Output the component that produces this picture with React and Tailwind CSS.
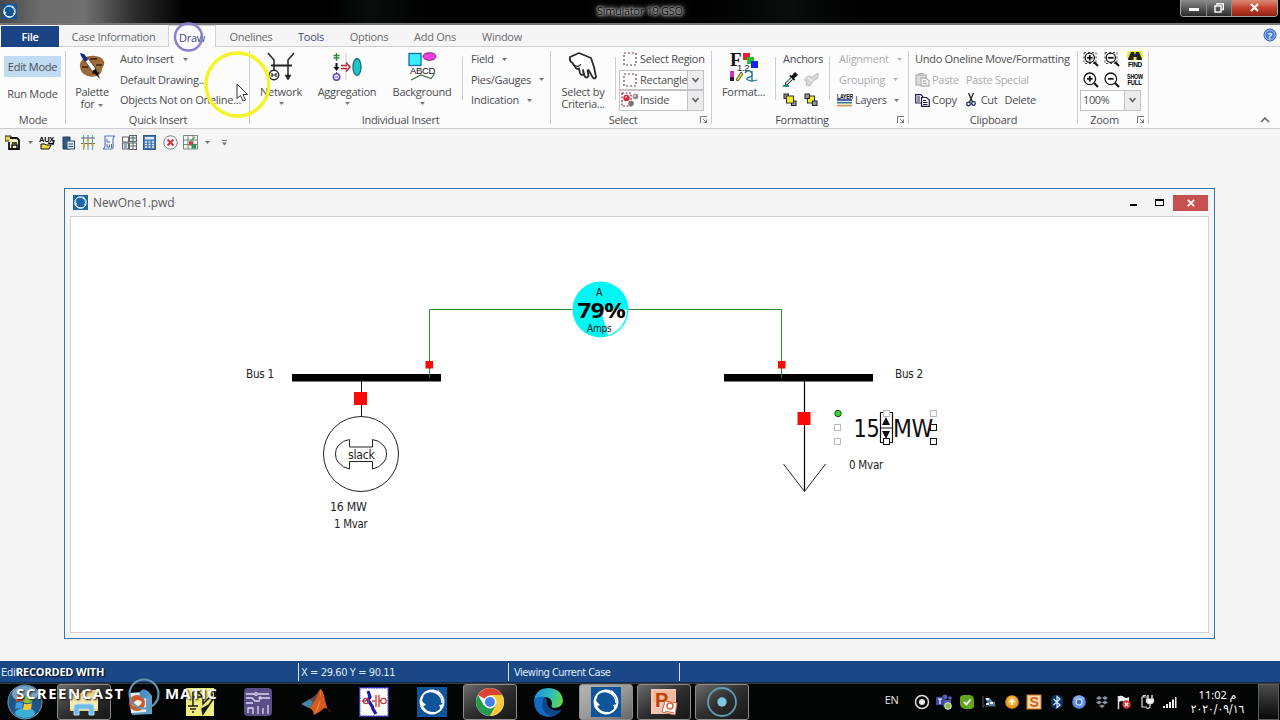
import { clsx } from 'clsx';

const uiFont = "font-['Open_Sans','Noto_Sans',sans-serif]";
const tahoma = "'DejaVu Sans Condensed', 'DejaVu Sans', sans-serif";

const tabs = [
  { name: 'Case Information', cls: 'w-[109px]' },
  { name: 'Draw', cls: 'w-[48px]', active: true },
  { name: 'Onelines', cls: 'w-[70px]' },
  { name: 'Tools', cls: 'w-[50px]', dark: true },
  { name: 'Options', cls: 'w-[66px]' },
  { name: 'Add Ons', cls: 'w-[66px]' },
  { name: 'Window', cls: 'w-[68px]' },
];

/* ---------- shared bits ---------- */

function Arrow({ className }) {
  return (
    <svg width="5" height="3" viewBox="0 0 5 3" className={clsx('shrink-0', className)}>
      <path d="M0 0H5L2.5 3Z" fill="#777" />
    </svg>
  );
}

function Sep() {
  return <div className="w-px h-[43px] mt-[10px] bg-[#cfcfd1] shrink-0" />;
}

function Group({ label, width, labelShift, launcher, children }) {
  return (
    <div className={clsx('relative flex flex-col h-[81px] shrink-0', width)}>
      <div className="flex h-[63px]">{children}</div>
      <div className={clsx('h-[18px] leading-[20px] text-center', labelShift)}>{label}</div>
      {launcher && (
        <svg width="8" height="8" viewBox="0 0 8 8" className="absolute right-[4px] bottom-[4px]" fill="none" stroke="#777">
          <path d="M.5 7V.5H7M3 3L6.5 6.5M6.5 3.5V6.5H3.5" />
        </svg>
      )}
      <div className="absolute right-0 top-[4px] h-[73px] w-px bg-[#cfcfd1]" />
    </div>
  );
}

function Row({ children, className }) {
  return <div className={clsx('flex items-center h-[20.6px] whitespace-nowrap', className)}>{children}</div>;
}

function BigButton({ icon, label, label2, width, arrow }) {
  return (
    <div className={clsx('flex flex-col items-center pt-[5px] shrink-0', width)}>
      <div className="h-[34px] flex items-start justify-center">{icon}</div>
      <span className="leading-[12px] whitespace-nowrap">{label}</span>
      {label2 && (
        <span className="flex items-center gap-[4px] leading-[12px] whitespace-nowrap">
          {label2}
          {arrow && <Arrow className="mt-[2px]" />}
        </span>
      )}
      {!label2 && arrow && <Arrow className="mt-[4px]" />}
    </div>
  );
}

function Combo({ icon, text, width }) {
  return (
    <div className={clsx('flex items-center h-[20.5px] border border-[#c3c3c5] bg-white', width)}>
      {icon}
      <span className="flex-1 overflow-hidden whitespace-nowrap">{text}</span>
      <span className="w-[16px] h-full bg-[#ececee] border-l border-[#c3c3c5] flex items-center justify-center shrink-0">
        <svg width="7" height="6" viewBox="0 0 7 6" fill="none" stroke="#666" strokeWidth="1.7">
          <path d="M.5 1L3.5 4.5L6.5 1" />
        </svg>
      </span>
    </div>
  );
}

function PowerWorldLogo({ size, light }) {
  return (
    <svg width={size} height={size} viewBox="0 0 30 30" className="shrink-0">
      <rect width="30" height="30" fill={light ? '#1a66a8' : '#0f5599'} />
      <circle cx="15" cy="15" r="11.5" fill="none" stroke="#fff" strokeWidth="1.8" />
      <path d="M6 9A11 11 0 0 0 17 25.5M9 5.5A11.500 11.500 0 0 1 25 16M4 19A12 12 0 0 0 24 22" fill="none" stroke="#fff" strokeWidth="1.4" />
      <path d="M21 3l4 5-6-1zM4 20l1-6 4 4zM27 17l-3 6-2-5z" fill="#fff" />
    </svg>
  );
}

/* ---------- ribbon icons ---------- */

function PaletteIcon() {
  return (
    <svg width="28" height="30" viewBox="0 0 28 30">
      <path d="M2 15C1 8 8 3 17 4C26 5 28 11 25 15C23 17 25 19 22 22C16 27 3 25 2 15Z" fill="#9c6a3a" />
      <path d="M12 7h7M18 13h6M4 15h6M14 21h7" stroke="#3b2412" strokeWidth="1.6" />
      <path d="M2 1l4 1 4 5-3 3-4-6z" fill="#162c8c" />
      <path d="M7.500 9.500L10.500 7L18 17L14.500 19.500Z" fill="#fff" stroke="#333" strokeWidth=".7" />
      <path d="M14 19l4-2 4 10z" fill="#111" />
    </svg>
  );
}

function NetworkIcon() {
  return (
    <svg width="28" height="30" viewBox="0 0 28 30" fill="none" stroke="#222" strokeWidth="1.5">
      <path d="M1 1L7 8V18M27 1L21 8V27" />
      <path d="M4 13.500H25" strokeWidth="2" />
      <circle cx="7" cy="23" r="4.700" />
      <path d="M5 21v4M9 21v4M5 23h4" strokeWidth="1.2" />
      <path d="M18 23l3 5 3-5z" fill="#222" strokeWidth=".5" />
    </svg>
  );
}

function AggregationIcon() {
  return (
    <svg width="30" height="30" viewBox="0 0 30 30" fill="none">
      <path d="M4.500 1V9M1.500 3.500H7.500M1.500 6H7.500" stroke="#2f8a3c" strokeWidth="1.4" />
      <path d="M4.500 11V17" stroke="#111" strokeWidth="2" />
      <path d="M1.500 15H7.500L4.500 19Z" fill="#111" />
      <path d="M4.500 20V22" stroke="#5548c8" />
      <circle cx="4.500" cy="25" r="3.200" stroke="#5548c8" strokeWidth="1.5" />
      <path d="M3 25h3" stroke="#5548c8" />
      <path d="M14 1V28" stroke="#f0c4c8" />
      <path d="M9 13.500H15M9 16.500H15M14 10.500L18 15L14 19.500" stroke="#b8242f" strokeWidth="1.5" />
      <ellipse cx="25" cy="15" rx="4" ry="8.500" fill="#1fc6c6" stroke="#1a6d78" strokeWidth="1.3" />
    </svg>
  );
}

function BackgroundIcon() {
  return (
    <svg width="30" height="30" viewBox="0 0 30 30">
      <rect x="2" y="1.500" width="12" height="12" fill="#3df0ff" stroke="#1769b5" strokeWidth="1.3" />
      <ellipse cx="22.500" cy="4.500" rx="6.500" ry="3.800" fill="#ee3ce0" stroke="#7b2a78" />
      <path d="M4 28L14 23L24 26.500L28 21" fill="none" stroke="#446b44" strokeWidth="1.2" />
      <text x="3" y="22" fontSize="9.500" textLength="25" fontFamily="Liberation Sans, sans-serif" fill="#111">ABCD</text>
    </svg>
  );
}

function HandIcon() {
  return (
    <svg width="30" height="30" viewBox="0 0 30 30">
      <path
        d="M2 5L11 1L23 6L26 15L28 25Q26.500 28 24.500 25L20.500 18L19.500 19L20.500 24Q18.500 27 16.500 24L15 18L15.500 22Q13.500 24.500 12 21L11 16.500Q8.500 18 7 14.500L4.500 11Q1 9 2 5Z"
        fill="#fff"
        stroke="#2b2b2b"
        strokeWidth="1.8"
        strokeLinejoin="round"
      />
      <path d="M5 13L10 14.500L13 12.500" fill="none" stroke="#2b2b2b" strokeWidth="1.2" />
    </svg>
  );
}

function FormatIcon() {
  return (
    <svg width="28" height="30" viewBox="0 0 28 30">
      <text x="0" y="14" fontSize="19" fontWeight="bold" fontFamily="Liberation Serif, serif" fill="#111">F</text>
      <rect x="13" y="1" width="7" height="7" fill="#e8202a" />
      <rect x="17" y="5" width="7" height="7" fill="#1fc22a" />
      <rect x="21" y="9" width="7" height="7" fill="#1226e8" />
      <text x="7" y="18.500" fontSize="9.500" fontFamily="Liberation Sans, sans-serif" fill="#222">1.2</text>
      <rect x="0" y="19" width="4" height="10" fill="#d82ad8" />
      <rect x="0" y="25" width="4" height="4" fill="#222" />
      <path d="M6 28L11 20L13 22L8 29Z" fill="#e8d820" stroke="#333" strokeWidth=".8" />
      <path d="M15 21Q18 17 21 20T20 25Q15 26 18 28T27 28M22 19V29" fill="none" stroke="#1c7480" strokeWidth="1.3" />
    </svg>
  );
}

function RegionIcon() {
  return (
    <svg width="14" height="14" viewBox="0 0 14 14" className="shrink-0">
      <rect x="1" y="1" width="12" height="12" fill="none" stroke="#6a3a44" strokeWidth="1.2" strokeDasharray="2 2" />
    </svg>
  );
}

function InsideIcon() {
  return (
    <svg width="18" height="16" viewBox="0 0 18 16" className="shrink-0">
      <path d="M1 1H10V14H1Z" fill="none" stroke="#a02030" strokeWidth="1.2" strokeDasharray="2 1.500" />
      <circle cx="5.500" cy="6" r="3.200" fill="#d02f3a" />
      <circle cx="14.500" cy="4.500" r="2.800" fill="#888" />
      <circle cx="10" cy="11.500" r="2.800" fill="#777" />
      <circle cx="14" cy="4" r="1" fill="#eee" />
      <circle cx="5" cy="5" r="1" fill="#f7b0b0" />
    </svg>
  );
}

function DropperIcon() {
  return (
    <svg width="15" height="15" viewBox="0 0 15 15">
      <path d="M9 4L12 .5L14.500 3L11 6Z" fill="#111" stroke="#111" />
      <path d="M7 3.500L11.500 8" stroke="#111" strokeWidth="2" />
      <path d="M8 5.500L2.500 11V13H4L9.500 7.500" fill="#bfe8ea" stroke="#222" />
      <path d="M0 14H6" stroke="#1b8f96" strokeWidth="2" />
    </svg>
  );
}

function BrushIcon() {
  return (
    <svg width="16" height="15" viewBox="0 0 16 15">
      <path d="M15 1L9 5L5 4L1 8L4 9L3 13L7 14L10 9L15 6Z" fill="#d6d6d6" stroke="#bdbdbd" />
      <path d="M5 6L9 9" stroke="#eee" strokeWidth="1.5" />
    </svg>
  );
}

function OrderIcon({ back }) {
  const box = <rect x="3.500" y="3" width="7" height="7" fill="#f2ee26" stroke="#333" />;
  return (
    <svg width="14" height="14" viewBox="0 0 14 14">
      {back && box}
      <rect x="1" y="1" width="4.500" height="4.500" fill="#999" stroke="#222" />
      <rect x="8.500" y="8" width="4.500" height="4.500" fill="#999" stroke="#222" />
      {!back && box}
    </svg>
  );
}

function LayersIcon() {
  return (
    <svg width="16" height="14" viewBox="0 0 16 14" className="shrink-0">
      <text x="0" y="5.500" fontSize="6.500" fontWeight="bold" textLength="16" lengthAdjust="spacingAndGlyphs" fontFamily="Liberation Sans, sans-serif" fill="#111">LAYER</text>
      <path d="M0 7H15" stroke="#1d3f9b" strokeWidth="1.6" />
      <path d="M0 9.700H15" stroke="#2f7a80" strokeWidth="1.6" />
      <path d="M0 12.600H15" stroke="#d89a58" strokeWidth="1.8" />
    </svg>
  );
}

function PasteIcon() {
  return (
    <svg width="15" height="14" viewBox="0 0 15 14" fill="none" stroke="#b2b2b2" strokeWidth="1.3" className="shrink-0">
      <rect x="1" y="2" width="10" height="10" fill="#dcdcdc" />
      <path d="M4 2V.7H8V2" />
      <path d="M6 5H11L14 8V13H6Z" fill="#fff" />
      <path d="M8 8H11M8 10.500H12" />
    </svg>
  );
}

function CopyIcon() {
  return (
    <svg width="15" height="13" viewBox="0 0 15 13" fill="#fff" stroke="#1c1c4c" strokeWidth="1.2" className="shrink-0">
      <path d="M.7 .7H6L8 3V9H.7Z" />
      <path d="M6.500 3.500H11.500L14.300 6V12.300H6.500Z" />
      <path d="M2 3H5M2 5H5M2 7H5M8 6.500H11M8 8.500H12.500M8 10.500H12.500" />
    </svg>
  );
}

function CutIcon() {
  return (
    <svg width="10" height="14" viewBox="0 0 10 14" fill="none" stroke="#1c2366" strokeWidth="1.3" className="shrink-0">
      <path d="M2.500 0L6.500 9M7.500 0L3.500 9" stroke="#222" />
      <circle cx="2.500" cy="11" r="1.800" />
      <circle cx="7.500" cy="10.500" r="1.800" />
    </svg>
  );
}

function MagIcon({ minus, dashed }) {
  return (
    <svg width="16" height="16" viewBox="0 0 16 16" fill="none" stroke="#161616">
      {dashed && <rect x="1" y="1.500" width="12" height="11" strokeDasharray="2 2" strokeWidth=".8" />}
      <circle cx="6.800" cy="6.800" r={dashed ? 4.6 : 5.8} strokeWidth="1.3" fill="#fff" />
      <path d="M4 6.800H9.600" strokeWidth="1.8" />
      {!minus && <path d="M6.800 4V9.600" strokeWidth="1.8" />}
      <path d="M11 11L15 15" strokeWidth="2.2" />
    </svg>
  );
}

function FindIcon() {
  return (
    <svg width="16" height="16" viewBox="0 0 16 16">
      <rect x="0" y="0" width="16" height="9" rx="3" fill="#e6f02a" />
      <path d="M4 1H7L8 4L9 1H12L15 8V9H9.500V6H6.500V9H1V8Z" fill="#222" />
      <text x="1" y="15.500" fontSize="6.500" fontWeight="bold" textLength="14" lengthAdjust="spacingAndGlyphs" fontFamily="Liberation Sans, sans-serif">FIND</text>
    </svg>
  );
}

function ShowFullIcon() {
  return (
    <svg width="16" height="14" viewBox="0 0 16 14" fontFamily="Liberation Sans, sans-serif" fontWeight="bold" fontSize="7">
      <text x="0" y="6" textLength="16" lengthAdjust="spacingAndGlyphs">SHOW</text>
      <text x="0.500" y="12" textLength="14" lengthAdjust="spacingAndGlyphs">FULL</text>
    </svg>
  );
}

/* ---------- window parts ---------- */

function TitleBar() {
  return (
    <div className="relative h-[25px] shrink-0 border-b-2 border-[#77777a] bg-[linear-gradient(90deg,#484848_0px,#6c6c6c_40px,#707070_85px,#2c2c2c_135px,#000_185px,#000_330px,#0a0c0c_370px,#000_430px,#000_700px,#0a0d0c_790px,#000_860px,#000_100%)] flex">
      <div className="pl-[2px] pt-[4px]">
        <PowerWorldLogo size={15} />
      </div>
      <div className="absolute left-[597px] top-[3px] w-[86px] whitespace-nowrap text-[11px] leading-[16px] tracking-[-0.3px] text-[#050505] [text-shadow:0_0_2px_#ccc,0_0_3px_#bbb,0_0_4px_#aaa,0_0_7px_#999,0_0_9px_#888]">
        Simulator 19 GSO
      </div>
      <div className="ml-auto mr-[2px] flex h-[17px] w-[98px] rounded-b border border-t-0 border-[#a5a5a5] overflow-hidden">
        <span className="w-[26px] border-r border-[#8a8a8a] bg-gradient-to-b from-[#8d8d8d] to-[#2c2c2c] flex justify-center pt-[8px]">
          <i className="w-[10px] h-[3px] bg-white" />
        </span>
        <span className="w-[25px] border-r border-[#8a8a8a] bg-gradient-to-b from-[#8d8d8d] to-[#2c2c2c] flex justify-center pt-[3px]">
          <svg width="10" height="10" viewBox="0 0 10 10" fill="none" stroke="#fff" strokeWidth="1.4">
            <path d="M3 2.500V.7H9.300V6.500H7.500" />
            <rect x="1" y="3" width="6" height="6" />
          </svg>
        </span>
        <span className="flex-1 bg-gradient-to-b from-[#d98a78] via-[#c4402a] to-[#8f2413] flex justify-center pt-[3px]">
          <svg width="9" height="9" viewBox="0 0 9 9" stroke="#fff" strokeWidth="2.2">
            <path d="M1 1L8 8M8 1L1 8" />
          </svg>
        </span>
      </div>
    </div>
  );
}

function TabBar() {
  return (
    <div className="flex h-[22px] shrink-0 bg-[#f5f5f6] border-b border-[#cfcfd1] pl-px text-[#6a6a6c]">
      <div className="w-[58px] mt-px h-[21px] bg-[#1a4485] text-white font-semibold text-center leading-[21px]">File</div>
      {tabs.map((t) => (
        <div
          key={t.name}
          className={clsx(
            'text-center leading-[24px] whitespace-nowrap shrink-0',
            t.cls,
            t.active && 'bg-[#fcfcfd] border border-b-0 border-[#d2d2d4] h-[22px] text-[#39497a]',
            t.dark && 'text-[#3f4f6b]'
          )}
        >
          {t.name}
        </div>
      ))}
      <svg width="14" height="14" viewBox="0 0 14 14" className="ml-auto mr-[3px] mt-[3px]">
        <circle cx="7" cy="7" r="6" fill="#4a7fd6" stroke="#2a55a0" />
        <circle cx="7" cy="7" r="5" fill="none" stroke="#c4d6f2" strokeWidth=".8" />
        <text x="7" y="10.500" textAnchor="middle" fontSize="9.500" fontWeight="bold" fill="#fff">?</text>
      </svg>
    </div>
  );
}

function Ribbon() {
  return (
    <div className="relative flex h-[82px] shrink-0 bg-[#fcfcfd] border-b border-[#cfcfd1] text-[#4c4c4e]">
      <Group label="Mode" width="w-[66px]">
        <div className="flex flex-col pl-[4px] pt-[9px] gap-[6px]">
          <div className="w-[57px] h-[21px] bg-[#c1dcf2] text-center leading-[22px] whitespace-nowrap">Edit Mode</div>
          <div className="w-[57px] h-[21px] text-center leading-[22px] whitespace-nowrap">Run Mode</div>
        </div>
      </Group>

      <Group label="Quick Insert" width="w-[184px]">
        <BigButton icon={<PaletteIcon />} label="Palette" label2="for" arrow width="w-[52px]" />
        <div className="pl-[2px] pt-[2px]">
          <Row>Auto Insert<Arrow className="ml-[9px]" /></Row>
          <Row>Default Drawing...</Row>
          <Row>Objects Not on Oneline...</Row>
        </div>
      </Group>

      <Group label="Individual Insert" width="w-[301px]">
        <BigButton icon={<NetworkIcon />} label="Network" arrow width="w-[62px]" />
        <BigButton icon={<AggregationIcon />} label="Aggregation" arrow width="w-[70px]" />
        <BigButton icon={<BackgroundIcon />} label="Background" arrow width="w-[80px]" />
        <Sep />
        <div className="pl-[8px] pt-[2px]">
          <Row>Field<Arrow className="ml-[8px]" /></Row>
          <Row>Pies/Gauges<Arrow className="ml-[8px]" /></Row>
          <Row>Indication<Arrow className="ml-[8px]" /></Row>
        </div>
      </Group>

      <Group label="Select" width="w-[161px]" labelShift="pr-[17px]" launcher>
        <BigButton icon={<HandIcon />} label="Select by" label2="Criteria..." width="w-[64px]" />
        <Sep />
        <div className="pl-[3px] pt-[2px]">
          <Row className="pl-[4px] gap-[3px]"><RegionIcon />Select Region</Row>
          <Combo width="w-[85px]" icon={<span className="pl-[3px] pr-[3px]"><RegionIcon /></span>} text="Rectangle" />
          <Combo width="w-[85px]" icon={<span className="pl-[1px] pr-px"><InsideIcon /></span>} text="Inside" />
        </div>
      </Group>

      <Group label="Formatting" width="w-[197px]" labelShift="pr-[17px]" launcher>
        <BigButton icon={<FormatIcon />} label="Format..." width="w-[63px]" />
        <Sep />
        <div className="pl-[7px] pt-[2px] w-[53px] shrink-0">
          <Row>Anchors</Row>
          <Row className="gap-[5px]"><DropperIcon /><BrushIcon /></Row>
          <Row className="gap-[7px]"><OrderIcon /><OrderIcon back /></Row>
        </div>
        <Sep />
        <div className="pl-[7px] pt-[2px]">
          <Row className="pl-[2px] text-[#adadaf]">Alignment<Arrow className="ml-[8px] opacity-50" /></Row>
          <Row className="pl-[2px] text-[#adadaf]">Grouping<Arrow className="ml-[8px] opacity-50" /></Row>
          <Row className="gap-[2px]"><LayersIcon />Layers<Arrow className="ml-[5px]" /></Row>
        </div>
      </Group>

      <Group label="Clipboard" width="w-[169px]">
        <div className="pl-[6px] pt-[2px]">
          <Row>Undo Oneline Move/Formatting</Row>
          <Row className="text-[#adadaf]"><PasteIcon /><span className="ml-[2px]">Paste</span><span className="ml-[7px]">Paste Special</span></Row>
          <Row><CopyIcon /><span className="ml-[2px] mr-[9px]">Copy</span><CutIcon /><span className="ml-[5px]">Cut</span><span className="ml-[7px]">Delete</span></Row>
        </div>
      </Group>

      <Group label="Zoom" width="w-[71px]" labelShift="pr-[18px]" launcher>
        <div className="pl-[2px] pt-[2px]">
          <Row className="pl-[3px] gap-[5px]"><MagIcon dashed /><MagIcon dashed minus /><span className="ml-[2px]"><FindIcon /></span></Row>
          <Row className="pl-[3px] gap-[5px]"><MagIcon /><MagIcon minus /><span className="ml-[2px]"><ShowFullIcon /></span></Row>
          <Combo width="w-[61px]" icon={<span className="pl-[2px]" />} text={<span className="text-[11px] tracking-[-0.4px]">100%</span>} />
        </div>
      </Group>

      <svg width="10" height="6" viewBox="0 0 10 6" fill="none" stroke="#666" strokeWidth="1.6" className="ml-auto mt-[70px] mr-[10px]">
        <path d="M1 5L5 1L9 5" />
      </svg>
    </div>
  );
}

function QuickBar() {
  return (
    <div className="flex items-center h-[27px] pl-[5px] shrink-0">
      <svg width="15" height="15" viewBox="0 0 15 15">
        <path d="M0 1H6V6H0Z" fill="#e3d33a" stroke="#222" />
        <path d="M5 3H12L14 5V14H4V7" fill="#f4f0c0" stroke="#111" strokeWidth="1.8" />
        <path d="M7 8H12M7 14V10H12V14" stroke="#111" strokeWidth="1.5" fill="none" />
      </svg>
      <Arrow className="ml-[8px] mr-[6px]" />
      <svg width="16" height="15" viewBox="0 0 16 15">
        <text x="0" y="7" fontSize="8" fontWeight="bold" textLength="15" lengthAdjust="spacingAndGlyphs" fontFamily="Liberation Sans, sans-serif">AUX</text>
        <path d="M2 9H6L7 10H12L10 14H2Z" fill="#e5d93c" stroke="#111" />
        <path d="M9 8L14 9L15 5" fill="none" stroke="#111" strokeWidth="1.5" />
      </svg>
      <svg width="13" height="14" viewBox="0 0 13 14" className="ml-[7px]">
        <path d="M1 1H8V13H1Z" fill="#2f5d80" stroke="#1f4260" />
        <rect x="5" y="5" width="7.500" height="8" fill="#dfe8ef" stroke="#35546c" />
        <path d="M6.500 8H11M6.500 10.500H11" stroke="#35546c" />
      </svg>
      <svg width="14" height="15" viewBox="0 0 14 15" className="ml-[6px]" fill="none">
        <path d="M2.500 0V15M7 0V15M11.500 0V15" stroke="#54b5bb" strokeWidth="1.2" />
        <path d="M0 3H14M0 8.500H14" stroke="#666" />
        <path d="M2 9.500h2M6 9.500h2M10.500 9.500h2M2 12h2M6 5h2" stroke="#e8a038" strokeWidth="2.500" />
      </svg>
      <svg width="14" height="15" viewBox="0 0 14 15" className="ml-[7px]">
        <path d="M3 1H13Q11 2 11 4V13Q10 14.500 8 14H1Q3 13 3 11Z" fill="#f2f5ff" stroke="#5d7fc4" strokeWidth="1.2" />
        <path d="M5 4V7H8M5 9V12H7.500V9.500M9.500 9V13" fill="none" stroke="#4a69ad" />
      </svg>
      <svg width="15" height="15" viewBox="0 0 15 15" className="ml-[6px]" fill="none" stroke="#5e666e">
        <rect x=".5" y="2" width="6" height="5" />
        <rect x="7.500" y=".5" width="7" height="6" fill="#dde4ea" />
        <rect x=".5" y="8" width="6" height="6" fill="#dde4ea" />
        <rect x="7.500" y="8" width="7" height="6.500" />
        <path d="M8 3H14M11 1V14M8 11H14M2 10H5M2 12H5" />
      </svg>
      <svg width="13" height="15" viewBox="0 0 13 15" className="ml-[6px]">
        <rect x=".5" y=".5" width="12" height="14" fill="#4a7dae" stroke="#2f5b88" />
        <rect x="2" y="2" width="9" height="2.500" fill="#d9e7f4" />
        <path d="M2 7H11M2 9.500H11M2 12H11" stroke="#e1ecf6" strokeWidth="1.500" strokeDasharray="2 1.500" />
      </svg>
      <svg width="15" height="15" viewBox="0 0 15 15" className="ml-[7px]">
        <circle cx="7.500" cy="7.500" r="6.700" fill="#fff" stroke="#777" />
        <path d="M4.500 4.500L10.500 10.500M10.500 4.500L4.500 10.500" stroke="#d8303a" strokeWidth="2" />
      </svg>
      <svg width="15" height="15" viewBox="0 0 15 15" className="ml-[5px]" fill="none">
        <path d="M.5 .5H14.500V14H.5ZM.5 5H14.500M.5 9.500H14.500M5 .5V14M10 .5V14" stroke="#76897c" />
        <path d="M6 8L12 2" stroke="#6aa879" strokeWidth="1.500" />
        <rect x="6" y="6.500" width="4" height="4" fill="#d33b46" />
        <rect x="8.500" y="9" width="4.500" height="4.500" fill="#2e9a56" />
      </svg>
      <Arrow className="ml-[7px]" />
      <svg width="5" height="6" viewBox="0 0 5 6" className="ml-[12px]">
        <path d="M0 .5H5" stroke="#777" />
        <path d="M0 2.500H5L2.500 5.500Z" fill="#777" />
      </svg>
    </div>
  );
}

function Handle({ x, y, active }) {
  return <rect x={x - 3} y={y - 3} width="6" height="6" fill="#fff" stroke={active ? '#111' : '#bbb'} />;
}

function Oneline() {
  return (
    <svg width="1137" height="415" viewBox="71 217 1137 415" fontFamily={tahoma} fontSize="12" fill="#222" className="block">
      {/* transmission line */}
      <path d="M429.500 375V309.500H781.500V375" fill="none" stroke="#2a8a30" />
      <circle cx="600.500" cy="309.500" r="28" fill="#00f5f5" />
      <path d="M600.500 309.500H627A26.500 26.500 0 0 1 608 335Z" fill="#fff" />
      <text x="599" y="296" textAnchor="middle" fontSize="10.500">A</text>
      <text x="577.500" y="318" fontSize="20.500" fontWeight="bold" fill="#000" fontFamily="'Noto Sans', sans-serif" textLength="48" lengthAdjust="spacingAndGlyphs">79%</text>
      <text x="587" y="332" fontSize="10.500" textLength="24.500" lengthAdjust="spacingAndGlyphs">Amps</text>

      {/* bus 1 and its generator */}
      <rect x="292" y="374" width="149" height="7.500" fill="#000" />
      <path d="M429.500 374V378" stroke="#2f6b33" />
      <rect x="425.500" y="361" width="7.500" height="7.500" fill="#fb0a0a" />
      <text x="246" y="378" textLength="28" lengthAdjust="spacingAndGlyphs">Bus 1</text>
      <path d="M361.500 381V417" stroke="#111" />
      <rect x="354" y="392" width="13" height="13" fill="#fb0a0a" />
      <circle cx="361" cy="454" r="37.500" fill="none" stroke="#222" />
      <path
        d="M349.500 447V439.500Q343 440 338 446Q335.500 449 335.500 454Q335.500 459 338 462Q343 468 349.500 469V461.500H372.500V469Q379 468 384 462Q386.500 459 386.500 454Q386.500 449 384 446Q379 440 372.500 439.500V447Z"
        fill="none"
        stroke="#222"
      />
      <text x="348" y="458.500" textLength="26.500" lengthAdjust="spacingAndGlyphs">slack</text>
      <text x="330" y="511" textLength="36.500" lengthAdjust="spacingAndGlyphs">16 MW</text>
      <text x="334" y="528" textLength="33.500" lengthAdjust="spacingAndGlyphs">1 Mvar</text>

      {/* bus 2 and its load */}
      <rect x="724" y="374" width="149" height="7.500" fill="#000" />
      <path d="M781.500 374V378" stroke="#2f6b33" />
      <rect x="778" y="361" width="7.500" height="7.500" fill="#fb0a0a" />
      <text x="895" y="378" textLength="28" lengthAdjust="spacingAndGlyphs">Bus 2</text>
      <path d="M804.500 381V491" stroke="#000" strokeWidth="1.2" />
      <rect x="797.500" y="412" width="13" height="13" fill="#fb0a0a" />
      <path d="M783.500 464L804.500 491.500L825.500 464" fill="none" stroke="#222" />
      <text x="849" y="469" textLength="34" lengthAdjust="spacingAndGlyphs">0 Mvar</text>

      {/* selected MW field */}
      <text x="853.500" y="437" fontSize="24" fill="#111" textLength="26" lengthAdjust="spacingAndGlyphs">15</text>
      <text x="893" y="437" fontSize="24" fill="#111" textLength="40" lengthAdjust="spacingAndGlyphs">MW</text>
      <path d="M880.500 412.500V442.500M892.500 412.500V442.500M880 412.500H884M889 412.500H893M880 442.500H884M889 442.500H893M880 428H893" stroke="#111" strokeWidth="1.2" />
      <path d="M882 425L886 417L890 425ZM882 431L886 439L890 431Z" fill="#111" />
      <circle cx="838" cy="413.500" r="3.200" fill="#2fd62f" stroke="#1c4a1c" />
      <Handle x={886.5} y={413.5} />
      <Handle x={933.5} y={413.5} />
      <Handle x={837.5} y={427.5} />
      <Handle x={837.5} y={441.5} />
      <Handle x={933.5} y={427.5} active />
      <Handle x={886.5} y={441.5} active />
      <Handle x={933.5} y={441.5} active />
    </svg>
  );
}

function ChildWindow() {
  return (
    <div className="ml-[64px] mt-[32px] w-[1151px] h-[451px] border border-[#3a74a8] bg-[#f5f5f6] flex flex-col px-[5px] pb-[5px] shrink-0">
      <div className="flex items-center h-[27px] shrink-0 pl-[3px] text-[12px] tracking-[-0.1px] text-[#5a5a5c]">
        <PowerWorldLogo size={15} light />
        <span className="ml-[5px]">NewOne1.pwd</span>
        <div className="ml-auto flex items-center pr-px">
          <i className="w-[7px] h-[2px] bg-black mt-[5px]" />
          <i className="w-[9px] h-[7px] border border-t-2 border-black ml-[18px]" />
          <span className="ml-[9px] w-[35px] h-[16px] bg-[#c75050] flex items-center justify-center">
            <svg width="8" height="8" viewBox="0 0 8 8" stroke="#fff" strokeWidth="1.8">
              <path d="M.8 .8L7.200 7.200M7.200 .8L.8 7.200" />
            </svg>
          </span>
        </div>
      </div>
      <div className="border border-[#cfd2d6] bg-white flex-1 overflow-hidden">
        <Oneline />
      </div>
    </div>
  );
}

function StatusBar() {
  return (
    <div className="flex items-center h-[22px] shrink-0 bg-[#1a4886] text-[#dfe9f7] text-[11px] leading-[20px] border-b border-[#0f2a52] font-['DejaVu_Sans_Condensed','DejaVu_Sans',sans-serif]">
      <div className="w-[298px] h-[18px] pl-px">Edit</div>
      <div className="w-[210px] h-[18px] border-l border-[#d5e0f0] pl-[2px] tracking-[-0.4px]">X = 29.60 Y = 90.11</div>
      <div className="w-[171px] h-[18px] border-l border-[#d5e0f0] pl-[5px] tracking-[-0.5px]">Viewing Current Case</div>
      <div className="h-[18px] border-l border-[#d5e0f0]" />
    </div>
  );
}

function TaskButton({ children, open, bright }) {
  return (
    <div className="w-[58px] h-[36px] flex items-center justify-center shrink-0">
      <div
        className={clsx(
          'w-[54px] h-[36px] flex items-center justify-center rounded-[3px]',
          open && 'border border-[#8c8c8c]',
          open && !bright && 'bg-gradient-to-br from-[#6d6d6d] via-[#2e2e2e] to-[#171717]',
          bright && 'bg-gradient-to-br from-[#b5b5b5] via-[#9a9a9a] to-[#666]'
        )}
      >
        {children}
      </div>
    </div>
  );
}

function Tray() {
  return (
    <div className="ml-auto flex items-center h-full">
      <span className="text-[#e8e8e8] text-[11px] mb-[4px] mr-[15px]">EN</span>
      <div className="flex items-center gap-[6.500px]">
        <svg width="16" height="16" viewBox="0 0 16 16" fill="none" stroke="#ddd" strokeWidth="1.500">
          <circle cx="8" cy="8" r="6.500" />
          <circle cx="8" cy="8" r="2.300" fill="#fff" />
        </svg>
        <svg width="16" height="16" viewBox="0 0 16 16">
          <circle cx="9" cy="3" r="2.500" fill="#5a60b8" />
          <circle cx="14" cy="4" r="1.800" fill="#5a60b8" />
          <path d="M7 6H15V11Q12 15 7 12Z" fill="#5059b3" />
          <rect x="0" y="3" width="8" height="8" fill="#3f479f" />
          <path d="M2 5H6M4 5V10" stroke="#fff" strokeWidth="1.200" />
          <circle cx="12" cy="12" r="3.300" fill="#8bbf4c" stroke="#e6f0d8" />
        </svg>
        <svg width="16" height="16" viewBox="0 0 16 16">
          <path d="M1 4Q1 1 5 1H11Q15 2 15 6V12Q15 15 11 15H6Q1 14 1 10Z" fill="#5fa51e" />
          <path d="M5 8L7.500 10.500L11.500 5.500" fill="none" stroke="#fff" strokeWidth="1.800" />
        </svg>
        <svg width="16" height="16" viewBox="0 0 16 16">
          <path d="M2 2V14M2 12H15" stroke="#557" />
          <path d="M4 4H9L12 8L14 7V12H8Z" fill="#5c7d9c" />
          <path d="M5 5H8M9 9H12M5 10H8" stroke="#e7eef5" strokeWidth="1.800" />
        </svg>
        <svg width="16" height="16" viewBox="0 0 16 16">
          <circle cx="8" cy="8" r="6.800" fill="#e99a1e" />
          <circle cx="8" cy="7" r="4.500" fill="#f6b94a" />
          <path d="M8 4L11 8H9V11H7V8H5Z" fill="#fff6dc" />
        </svg>
        <svg width="16" height="16" viewBox="0 0 16 16">
          <rect x="1" y="1" width="14" height="14" fill="#f5d9ac" stroke="#d4761c" />
          <text x="8" y="13" textAnchor="middle" fontSize="14" fontWeight="bold" fill="#cf6410" fontFamily="Liberation Sans, sans-serif">S</text>
        </svg>
        <svg width="16" height="16" viewBox="0 0 16 16">
          <rect x="2" y="1" width="12" height="14" rx="5" fill="#0c3460" />
          <path d="M4.500 5L11 11L8 13.500V2.500L11 5L4.500 11" fill="none" stroke="#d8ebff" strokeWidth="1.200" />
        </svg>
        <svg width="16" height="16" viewBox="0 0 16 16">
          <circle cx="8" cy="8" r="6.800" fill="#5f8fe0" />
          <path d="M8 8L2 5A7 7 0 0 1 14 5Z" fill="#82aaf0" />
          <circle cx="8" cy="8" r="3" fill="#3e6fd0" stroke="#dce8ff" strokeWidth="1.200" />
        </svg>
        <svg width="16" height="16" viewBox="0 0 16 16" fill="#84909a">
          <path d="M5 2L8 4L5 6L2 4ZM11 2L14 4L11 6L8 4ZM5 6.500L8 8.500L5 10.500L2 8.500ZM11 6.500L14 8.500L11 10.500L8 8.500ZM8 10.500L11 12L8 14L5 12Z" />
        </svg>
        <svg width="16" height="16" viewBox="0 0 16 16">
          <path d="M2.500 2V15" stroke="#ddd" strokeWidth="1.500" />
          <path d="M3 2Q6 1 8 3T13 3V9Q10 10 8 8T3 8Z" fill="#f2f2f2" />
          <circle cx="10.500" cy="10.500" r="4.200" fill="#d9303a" />
          <path d="M8.700 8.700L12.300 12.300M12.300 8.700L8.700 12.300" stroke="#fff" strokeWidth="1.300" />
        </svg>
        <svg width="16" height="16" viewBox="0 0 16 16" fill="none" stroke="#ddd" strokeWidth="1.200">
          <path d="M8 3H3V13H8M4.500 3V1.500H7" />
          <path d="M9 1V5M13 1V5" strokeWidth="1.500" />
          <path d="M7.500 5H14.500V8Q13 10 11 10Q9 10 7.500 8Z" fill="#f2f2f2" />
          <path d="M11 10V13Q10 15 7 14" />
        </svg>
        <svg width="16" height="16" viewBox="0 0 16 16" fill="#eee">
          <path d="M2 12H4V14H2ZM5 10H7V14H5ZM8 8H10V14H8ZM11 5.500H13V14H11ZM14 3H15.500V14H14Z" />
        </svg>
      </div>
      <div className="w-[81px] text-center text-white text-[11px] leading-[15px] whitespace-nowrap font-['Noto_Sans','DejaVu_Sans',sans-serif]">
        <div className="tracking-[-0.5px]">11:02 م</div>
        <div className="text-[12px] tracking-[-0.1px] font-['DejaVu_Sans_Condensed','DejaVu_Sans',sans-serif]"><bdo dir="ltr">٢٠٢٠/٠٩/١٦</bdo></div>
      </div>
      <div className="w-[21px] h-[36px] mr-px border border-[#5d5d5d] bg-gradient-to-b from-[#4c4c4c] to-[#0a0a0a]" />
    </div>
  );
}

function Taskbar() {
  return (
    <div className="flex items-center h-[37px] shrink-0 bg-[#030404] border-t border-[#3c3c3c] overflow-hidden">
      <div className="w-[55px] pl-[7px] shrink-0">
        <svg width="36" height="36" viewBox="0 0 36 36">
          <circle cx="18" cy="18" r="17" fill="#1f5585" stroke="#7f9db4" />
          <ellipse cx="18" cy="10" rx="13" ry="8" fill="#79a4c0" />
          <ellipse cx="18" cy="29" rx="10" ry="5" fill="#3ab0d8" />
          <path d="M10 12Q13 10 17 12L16 18Q12 16 9 18Z" fill="#e4572a" />
          <path d="M18 12.500Q22 14 26 12L25 18Q21 20 17 18.500Z" fill="#8cc63e" />
          <path d="M9 19Q12 17.500 16 19L15 25Q11 23.500 8 25Z" fill="#3f9fe0" />
          <path d="M17 19.500Q21 21 25 19L24 25Q20 27 16 25.500Z" fill="#f8c62f" />
        </svg>
      </div>
      <TaskButton open>
        <svg width="34" height="30" viewBox="0 0 34 30">
          <path d="M3 6H14L16 3H31V24H3Z" fill="#e6d384" />
          <path d="M3 9H31V22H3Z" fill="#f5eab2" />
          <path d="M7 28V20Q7 17 10 17H24Q27 17 27 20V28H22V22H12V28Z" fill="#6fb9e6" stroke="#b6def5" />
        </svg>
      </TaskButton>
      <TaskButton>
        <svg width="28" height="28" viewBox="0 0 28 28" className="mr-[4px]">
          <path d="M3 5L22 3L26 8V26L6 27Z" fill="#5e9fc9" />
          <path d="M3 5L20 5V24L5 25Z" fill="#e6ecef" />
          <circle cx="11" cy="15" r="8" fill="#cf5c28" />
          <path d="M6 17Q11 9 16 14Q13 21 6 17Z" fill="#f4eee8" />
        </svg>
      </TaskButton>
      <TaskButton>
        <svg width="28" height="30" viewBox="0 0 28 30" fill="none" stroke="#1b1b10" strokeWidth="1.500">
          <rect x="0" y="1" width="28" height="28" fill="#eded82" stroke="none" />
          <path d="M7 5V19M2 19H12M4 22H10M6 25H8M7 10H17L12 5M17 10V17L27 7" />
          <path d="M27 12L17 27L16 22L23 18Z" fill="#1b1b10" />
        </svg>
      </TaskButton>
      <TaskButton>
        <svg width="28" height="28" viewBox="0 0 28 28" fill="none" stroke="#ddd6f5" strokeWidth="1.300">
          <rect width="28" height="28" rx="4" fill="#594e86" stroke="none" />
          <path d="M2 6H11M2 10H8L11 13H16M2 15H9M14 6H25M17 10H26M14 26V18M19 26V20M24 26V17M9 26V20H4V25" />
          <circle cx="12" cy="6" r="1.300" />
          <circle cx="16" cy="10" r="1" />
        </svg>
      </TaskButton>
      <TaskButton>
        <svg width="30" height="28" viewBox="0 0 30 28">
          <path d="M0 16L9 11L14 15L8 20Z" fill="#3f86a8" />
          <path d="M9 11Q14 9 19 1L14 17L8 20L12 15Z" fill="#6a4a40" />
          <path d="M19 1Q22 1 24 12T30 24Q25 18 22 21T13 27Q12 21 8 20Q14 16 19 1Z" fill="#d65a20" />
          <path d="M19 1Q21 8 18 15T14 26Q21 17 19 1Z" fill="#f09a40" />
        </svg>
      </TaskButton>
      <TaskButton>
        <svg width="30" height="30" viewBox="0 0 30 30" fill="none">
          <rect x=".7" y=".7" width="28.500" height="28.500" fill="#fff" stroke="#2a2ac0" strokeWidth="1.400" strokeDasharray="2 .7" />
          <path d="M9 4L11 10L9 13L13 19L14 22L17 27" stroke="#1c1cae" strokeWidth="3.200" />
          <path d="M3 14H7M13 14H16M17 8V20M20 8V20M20 14H22" stroke="#c73a3a" strokeWidth="1.400" />
          <circle cx="7" cy="14" r="2.700" stroke="#c73a3a" strokeWidth="1.200" />
          <circle cx="24.500" cy="14" r="2.700" stroke="#c73a3a" strokeWidth="1.200" />
        </svg>
      </TaskButton>
      <TaskButton><PowerWorldLogo size={30} /></TaskButton>
      <TaskButton open>
        <svg width="30" height="30" viewBox="0 0 30 30">
          <circle cx="15" cy="15" r="14" fill="#fff" />
          <path d="M15 15L2.900 8A14 14 0 0 1 27.100 8Z" fill="#da4433" />
          <path d="M2.900 8A14 14 0 0 0 15 29L21 18.500L15 15L9 18.500Z" fill="#25994f" />
          <path d="M27.100 8H15L21 18.500L15 29A14 14 0 0 0 27.100 8Z" fill="#f7c934" />
          <circle cx="15" cy="15" r="6.500" fill="#fff" />
          <circle cx="15" cy="15" r="5" fill="#4580ea" />
        </svg>
      </TaskButton>
      <TaskButton>
        <svg width="31" height="31" viewBox="0 0 31 31">
          <defs>
            <linearGradient id="edgeTop" x1="0" x2="1" y1="0.300" y2="0.500">
              <stop offset="0" stopColor="#1e8fe0" />
              <stop offset=".6" stopColor="#2fc1b4" />
              <stop offset="1" stopColor="#66d44a" />
            </linearGradient>
          </defs>
          <path d="M1 13Q3 1 16 1Q29 2 30 14Q29 21 21 21Q17 20 19 17Q19 10 11 10Q4 10 1 13Z" fill="url(#edgeTop)" />
          <path d="M1 13Q5 9 12 10Q9 14 11 19Q14 26 21 26Q26 26 29 22Q24 30 15 30Q1 28 1 13Z" fill="#1469c2" />
          <path d="M12 10Q8 15 10 22Q13 29 19 29Q25 28 29 22Q24 25 18 22Q13 18 14 13Z" fill="#0d4589" />
        </svg>
      </TaskButton>
      <TaskButton open bright><PowerWorldLogo size={30} /></TaskButton>
      <TaskButton open>
        <svg width="28" height="28" viewBox="0 0 28 28">
          <path d="M1 1H26V26H1Z" fill="#f1c7b3" />
          <path d="M3 3H25V14H3Z" fill="#f4b99c" />
          <text x="5" y="19" fontSize="20" fontWeight="bold" fill="#b9420e" fontFamily="Liberation Sans, sans-serif">P</text>
          <path d="M15 13L27 15L25 27L12 24Z" fill="#fff" stroke="#d3633a" />
          <circle cx="20" cy="18" r="3" fill="none" stroke="#d3633a" strokeWidth="1.500" />
          <path d="M15 23L24 25" stroke="#d3633a" />
        </svg>
      </TaskButton>
      <TaskButton open>
        <svg width="32" height="32" viewBox="0 0 32 32">
          <circle cx="16" cy="16" r="14" fill="none" stroke="#5f9eb6" strokeWidth="1.800" />
          <circle cx="16" cy="16" r="4.700" fill="#7ec7e4" />
        </svg>
      </TaskButton>
      <Tray />
    </div>
  );
}

function Watermark() {
  return (
    <div className="absolute left-[16px] top-[664px] text-white font-bold whitespace-nowrap [text-shadow:1px_1px_2px_#000]">
      <div className="text-[11px] leading-[15px] tracking-[-0.2px]">RECORDED WITH</div>
      <div className="flex items-center h-[30px] text-[15px]">
        <span className="w-[111px] tracking-[1.5px] leading-[16px] mb-[2px]">SCREENCAST</span>
        <svg width="34" height="34" viewBox="0 0 34 34" className="shrink-0">
          <circle cx="17" cy="17" r="14.500" fill="none" stroke="#6294b4" strokeWidth="2.200" />
          <circle cx="17" cy="17" r="4.500" fill="#4d8fc2" />
        </svg>
        <span className="ml-[4px] tracking-[1px] leading-[16px] mb-[2px]">MATIC</span>
      </div>
    </div>
  );
}

export default function App() {
  return (
    <div className={clsx('relative w-[1280px] h-[720px] overflow-hidden bg-[#f5f5f6] flex flex-col text-[11px] tracking-[-0.28px]', uiFont)}>
      <TitleBar />
      <TabBar />
      <Ribbon />
      <QuickBar />
      <div className="flex-1 min-h-0 flex flex-col">
        <ChildWindow />
      </div>
      <StatusBar />
      <Taskbar />

      {/* click and pointer highlights */}
      <svg width="100" height="110" viewBox="170 20 100 110" className="absolute left-[170px] top-[20px] pointer-events-none" fill="none">
        <circle cx="188.500" cy="37" r="13.500" stroke="#8a80cc" strokeWidth="2.500" />
        <circle cx="237.500" cy="84.500" r="31.500" stroke="#f4f428" strokeWidth="3.500" />
        <path d="M237 84V98.500L240.500 95.500L243 101L245.500 100L243 94.500H247.500Z" fill="#fff" stroke="#333" />
      </svg>
      <Watermark />
    </div>
  );
}
